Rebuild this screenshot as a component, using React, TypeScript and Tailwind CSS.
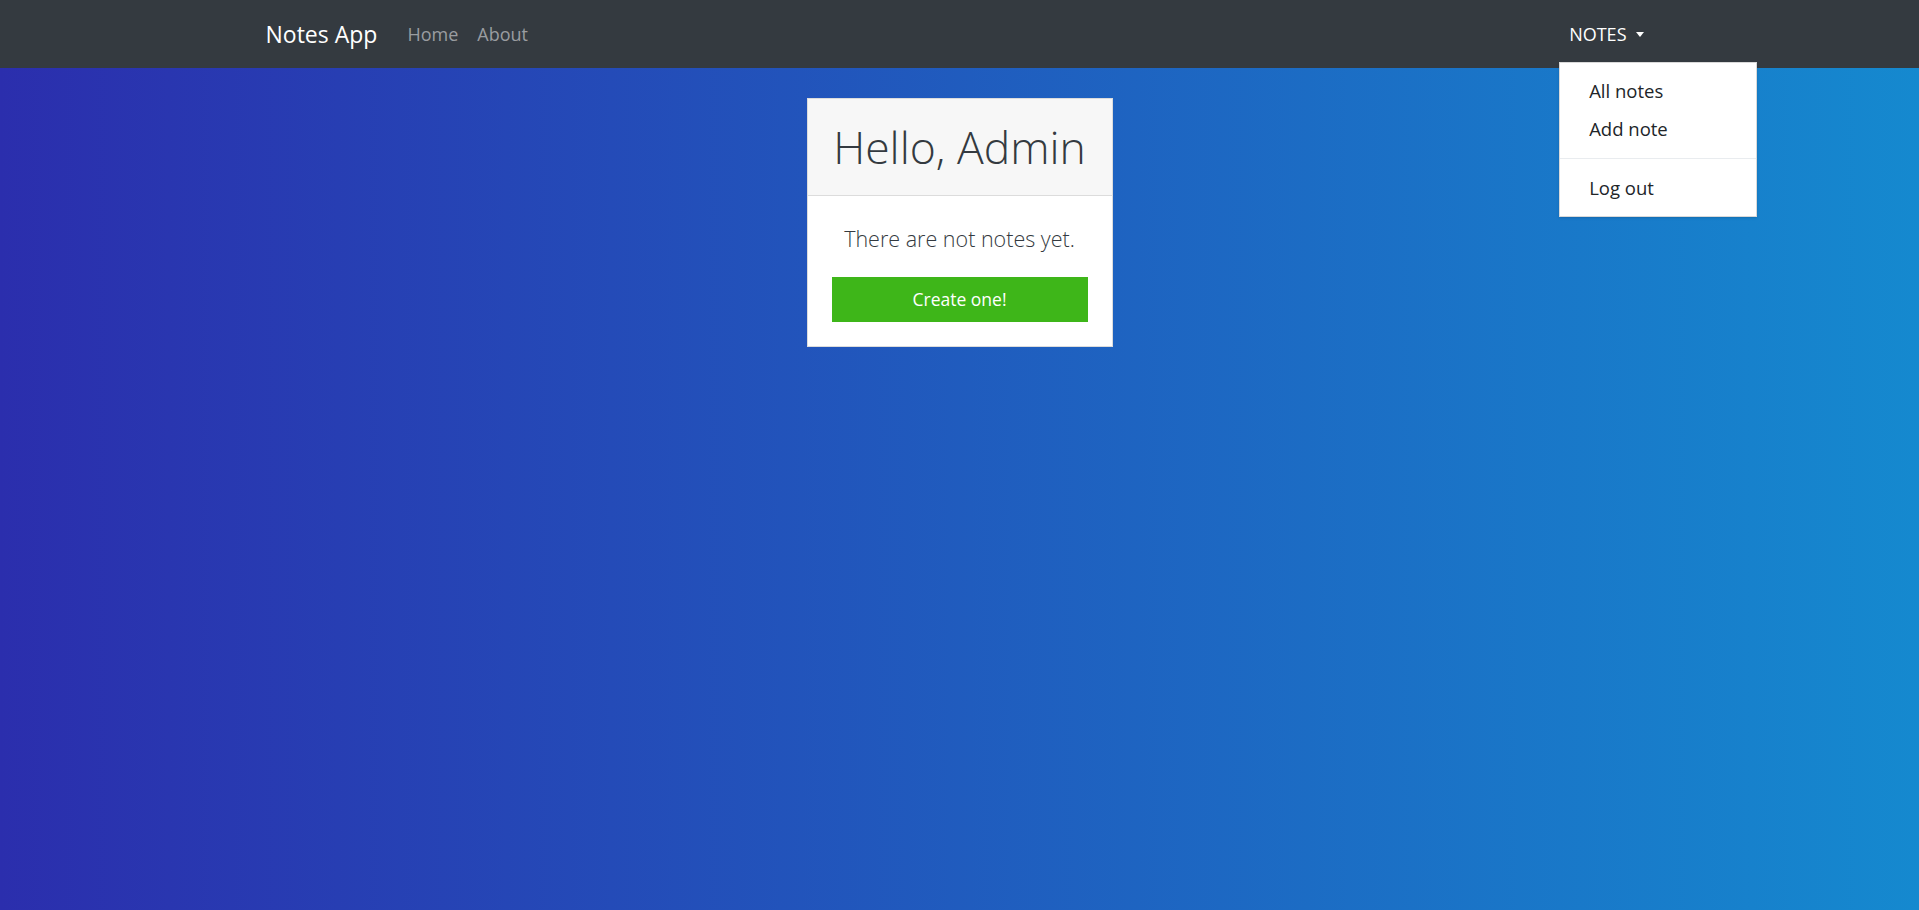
import React from "react";

export default function App() {
  return (
    <div
      className="min-h-screen w-full bg-[linear-gradient(to_right,#2b2ead,#1589cf)]"
      style={{ fontFamily: '"Open Sans", "Noto Sans", sans-serif' }}
    >
      <nav className="h-[68px] bg-[#343a40]">
        <div className="mx-auto flex h-full w-[1424px] items-center justify-between px-[18px]">
          <div className="flex items-center">
            <a className="mr-[30px] text-[23px] leading-none text-white">Notes App</a>
            <a className="pr-[10px] text-[18px] leading-none text-[#9a9da0]">Home</a>
            <a className="pl-[9px] text-[18px] leading-none text-[#9a9da0]">About</a>
          </div>
          <div className="relative h-full">
            <button className="flex h-full items-center px-[10px] text-[18px] leading-none text-white">
              NOTES
              <span className="ml-[9px] mt-[1px] inline-block h-0 w-0 border-x-[4.5px] border-t-[5px] border-x-transparent border-t-white" />
            </button>
            <div className="absolute left-0 top-[62px] z-10 w-[198px] border border-[#d9d9d9] bg-white py-[9px] shadow-sm">
              <a className="block px-[29px] py-[5px] text-[18.5px] leading-[28px] text-[#212529]">All notes</a>
              <a className="block px-[29px] py-[5px] text-[18.5px] leading-[28px] text-[#212529]">Add note</a>
              <div className="my-[10px] h-px bg-[#e9ecef]" />
              <a className="block px-[29px] py-[5px] text-[18.5px] leading-[28px] text-[#212529]">Log out</a>
            </div>
          </div>
        </div>
      </nav>
      <main className="flex justify-center pt-[30px]">
        <div className="w-[306px] border border-[#dcdcdc] bg-white">
          <div className="flex h-[97px] items-center justify-center border-b border-[#dcdcdc] bg-[#f7f7f7]">
            <h1 className="text-[44.5px] font-light leading-none text-[#343a40]">Hello, Admin</h1>
          </div>
          <div className="flex flex-col items-center px-[24px] pb-[24px] pt-[25px]">
            <p className="text-[21.5px] font-light leading-[36px] text-[#343a40]">There are not notes yet.</p>
            <button className="mt-[20px] h-[45px] w-full bg-[#3eb619] text-[17.5px] text-white">Create one!</button>
          </div>
        </div>
      </main>
    </div>
  );
}
